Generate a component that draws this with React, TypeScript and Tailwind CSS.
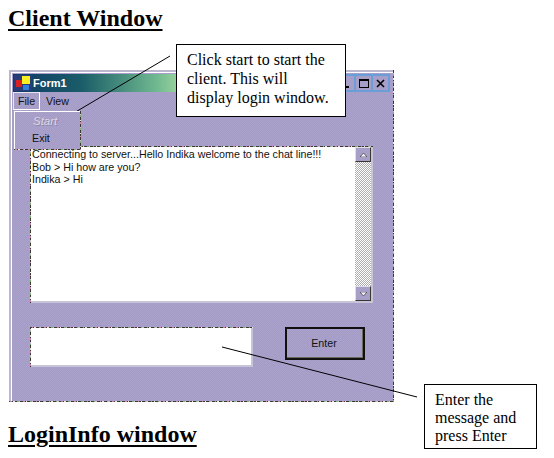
const edge = "[border-image:repeating-linear-gradient(45deg,#3a3a32_0,#3a3a32_2px,#d080b0_2px,#d080b0_3px,#3a3a32_3px,#3a3a32_4px,#e8e4d8_4px,#e8e4d8_5px,#3a3a32_5px,#3a3a32_7px,#80b070_7px,#80b070_8px,#c8c0d0_8px,#c8c0d0_9px)_1]";

export default function App() {
  return (
    <div className="relative w-[554px] h-[458px] overflow-hidden bg-white font-['Liberation_Serif',serif] text-black">
      <h1 className="ml-2 pt-[5px] w-fit text-[24px] leading-[27px] font-bold underline decoration-2 underline-offset-[3px]">Client Window</h1>

      <div className={`ml-[9px] mt-[38px] pl-[3px] pt-[3px] w-[385px] h-[332px] bg-[#a79fc8] bg-[conic-gradient(#aaa2ca_25%,#a49cc6_0_50%,#aaa2ca_0_75%,#a49cc6_0)] bg-[length:2px_2px] border-r border-b border-solid ${edge} shadow-[inset_2px_2px_0_#bbb7cf,inset_3px_3px_0_#ffffff] font-['Liberation_Sans',sans-serif] flex flex-col`}>
        <div className="ml-[1px] mt-[1px] h-[18px] mr-[3px] flex items-center bg-[linear-gradient(90deg,#103a68_0%,#1a5c68_18%,#6fb890_38%,#a8dca0_46%,#a8dca0_88%,#6a9ed8_88.5%,#6a9ed8_100%)]">
          <svg width="18" height="16" viewBox="0 0 18 16" className="ml-[1px] shrink-0">
            <rect width="18" height="16" fill="#2a3c78" />
            <rect x="2" y="5" width="6" height="7" fill="#d82020" />
            <rect x="8" y="1" width="8" height="8" fill="#f8f020" />
            <rect x="9" y="10" width="6" height="5" fill="#3080e0" />
          </svg>
          <span className="ml-[1px] text-[11px] font-bold text-white">Form1</span>
          <div className="ml-auto mr-[2px] flex gap-[2px]">
            <div className="w-[15px] h-[14px] bg-[#a79fc8] flex items-end pl-[3px] pb-[2px]"><div className="w-[7px] h-[2px] bg-black" /></div>
            <div className="w-[15px] h-[14px] bg-[#a79fc8] flex items-center justify-center"><div className="w-[10px] h-[9px] border border-t-2 border-black" /></div>
            <div className="w-[15px] h-[14px] bg-[#a79fc8] flex items-center justify-center">
              <svg width="9" height="9" viewBox="0 0 9 9"><path d="M1 1 8 8M8 1 1 8" stroke="black" strokeWidth="1.6" /></svg>
            </div>
          </div>
        </div>

        <div className="relative h-[18px] ml-[1px] flex items-center text-[10.7px] text-[#111]">
          <div className="w-[27px] h-[18px] border border-l-[#e8e4f0] border-t-[#e8e4f0] border-r-white border-b-white flex items-center justify-center pt-[1px]">File</div>
          <span className="ml-[6px]">View</span>
          <div className={`absolute left-[1px] top-[19px] z-10 w-[67px] h-[39px] bg-[#a79fc8] bg-[conic-gradient(#aaa2ca_25%,#a49cc6_0_50%,#aaa2ca_0_75%,#a49cc6_0)] bg-[length:2px_2px] border-r border-b border-solid ${edge} shadow-[inset_1px_1px_0_#ffffff] pt-[2px] pl-[18px] leading-[17px]`}>
            <div className="ml-[1px] italic text-[11.5px] text-[#ddd6e4] [text-shadow:1px_1px_0_#8f86a8]">Start</div>
            <div>Exit</div>
          </div>
        </div>

        <div className={`ml-[18px] mt-[36px] w-[343px] h-[157px] bg-white border-t border-l border-solid ${edge} shadow-[inset_-2px_-2px_0_#c8c4d8] pl-[1px] pr-[2px] pb-[2px] flex text-[10.7px] leading-[12.5px] text-[#111]`}>
          <div className="flex-1 pt-[1px]">
            <div>Connecting to server...Hello Indika welcome to the chat line!!!</div>
            <div>Bob &gt; Hi how are you?</div>
            <div>Indika &gt; Hi</div>
          </div>
          <div className="w-[16px] flex flex-col bg-[conic-gradient(#aeaeae_25%,#ffffff_0_50%,#aeaeae_0_75%,#ffffff_0)] bg-[length:2px_2px]">
            <div className="h-[15px] bg-[#a79fc8] border border-[#e0dcec] border-r-[#3a3530] border-b-[#3a3530] flex items-center justify-center">
              <svg width="7" height="4" viewBox="0 0 7 4"><path d="M3.5 0 7 4H0Z" fill="#f4f4f4" stroke="#222" strokeWidth=".6" /></svg>
            </div>
            <div className="mt-auto h-[15px] bg-[#a79fc8] border border-[#e0dcec] border-r-[#3a3530] border-b-[#3a3530] flex items-center justify-center">
              <svg width="7" height="4" viewBox="0 0 7 4"><path d="M0 0H7L3.5 4Z" fill="#f4f4f4" stroke="#222" strokeWidth=".6" /></svg>
            </div>
          </div>
        </div>

        <div className="ml-[18px] mt-[24px] flex items-start">
          <div className={`w-[223px] h-[40px] bg-white border-t border-l border-solid ${edge} shadow-[inset_-2px_-2px_0_#c8c4d8]`} />
          <div className="ml-[32px] w-[80px] h-[33px] border-2 border-[#111] shadow-[inset_-1px_-1px_0_#6f6a60] flex items-center justify-center text-[10.7px] text-[#111] pr-[2px]">Enter</div>
        </div>
      </div>

      <h2 className="absolute left-2 top-[421px] text-[24px] leading-[27px] font-bold underline decoration-2 underline-offset-[3px]">LoginInfo window</h2>

      <svg className="absolute inset-0 pointer-events-none" width="554" height="458">
        <path d="M57 123 170 56M222 347 417 397" stroke="black" strokeWidth="1" fill="none" />
      </svg>

      <div className="absolute left-[176px] top-[44px] w-[170px] h-[73px] bg-white border border-black pl-[10px] pt-[5px] text-[16px] leading-[19px]">
        Click start to start the<br />client. This will<br />display login window.
      </div>
      <div className="absolute left-[424px] top-[384px] w-[113px] h-[65px] bg-white border border-black pl-[10px] pt-[6px] text-[16px] leading-[18px]">
        Enter the<br />message and<br />press Enter
      </div>
    </div>
  );
}
